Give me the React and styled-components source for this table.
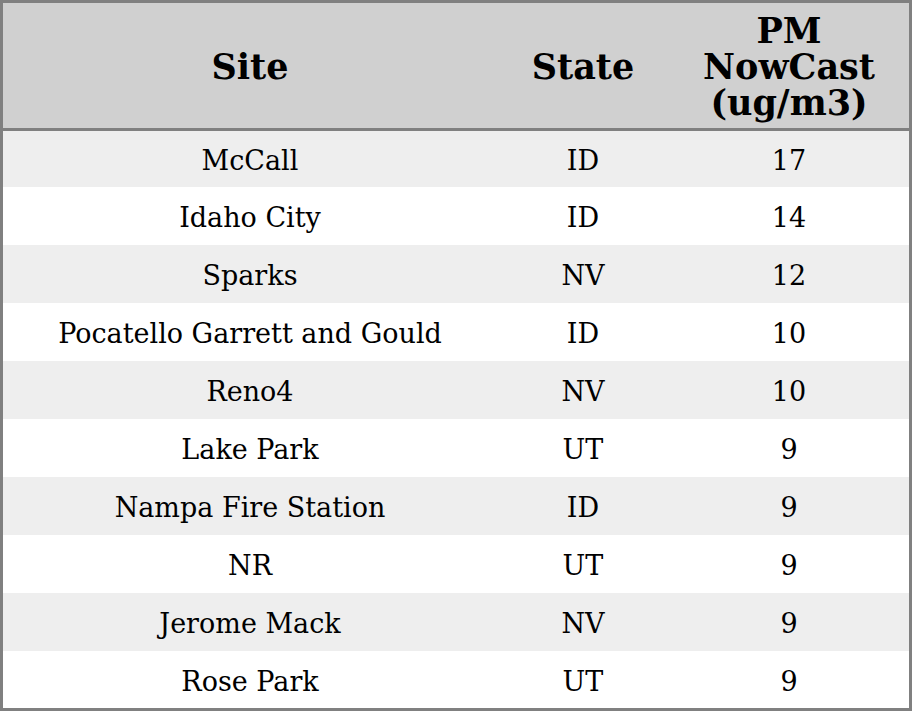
import React from "react";
import styled, { createGlobalStyle } from "styled-components";

const Global = createGlobalStyle`
  html, body { margin: 0; padding: 0; background: #ffffff; }
  body { font-family: "DejaVu Serif", serif; }
`;

const Frame = styled.div`
  width: 912px;
  height: 711px;
  box-sizing: border-box;
  border: 3px solid #808080;
  overflow: hidden;
`;

const Table = styled.table`
  width: 906px;
  border-collapse: separate;
  border-spacing: 0;
  font-family: "DejaVu Serif", serif;
  color: #000;
  table-layout: fixed;
`;

const Col = styled.col`
  width: ${(p) => p.$w}px;
`;

const HeadRow = styled.tr`
  height: 128px;
`;

const Th = styled.th`
  background: #d0d0d0;
  border-bottom: 3px solid #808080;
  padding: 3px 2px 0;
  font-size: 35px;
  line-height: 36px;
  font-weight: bold;
  text-align: center;
  vertical-align: middle;
`;

const Row = styled.tr`
  background: ${(p) => (p.$alt ? "#eeeeee" : "#ffffff")};
  height: ${(p) => p.$h}px;
`;

const Td = styled.td`
  padding: 4px 4px 0;
  font-size: 27px;
  line-height: 30px;
  text-align: center;
  vertical-align: middle;
`;

const rows = [
  ["McCall", "ID", "17"],
  ["Idaho City", "ID", "14"],
  ["Sparks", "NV", "12"],
  ["Pocatello Garrett and Gould", "ID", "10"],
  ["Reno4", "NV", "10"],
  ["Lake Park", "UT", "9"],
  ["Nampa Fire Station", "ID", "9"],
  ["NR", "UT", "9"],
  ["Jerome Mack", "NV", "9"],
  ["Rose Park", "UT", "9"],
];

export default function App() {
  return (
    <>
      <Global />
      <Frame>
        <Table>
          <colgroup>
            <Col $w={494} />
            <Col $w={172} />
            <Col $w={240} />
          </colgroup>
          <thead>
            <HeadRow>
              <Th>Site</Th>
              <Th>State</Th>
              <Th>
                PM
                <br />
                NowCast
                <br />
                (ug/m3)
              </Th>
            </HeadRow>
          </thead>
          <tbody>
            {rows.map((r, i) => (
              <Row
                key={i}
                $alt={i % 2 === 0}
                $h={i === 0 ? 56 : i === rows.length - 1 ? 57 : 58}
              >
                <Td>{r[0]}</Td>
                <Td>{r[1]}</Td>
                <Td>{r[2]}</Td>
              </Row>
            ))}
          </tbody>
        </Table>
      </Frame>
    </>
  );
}
